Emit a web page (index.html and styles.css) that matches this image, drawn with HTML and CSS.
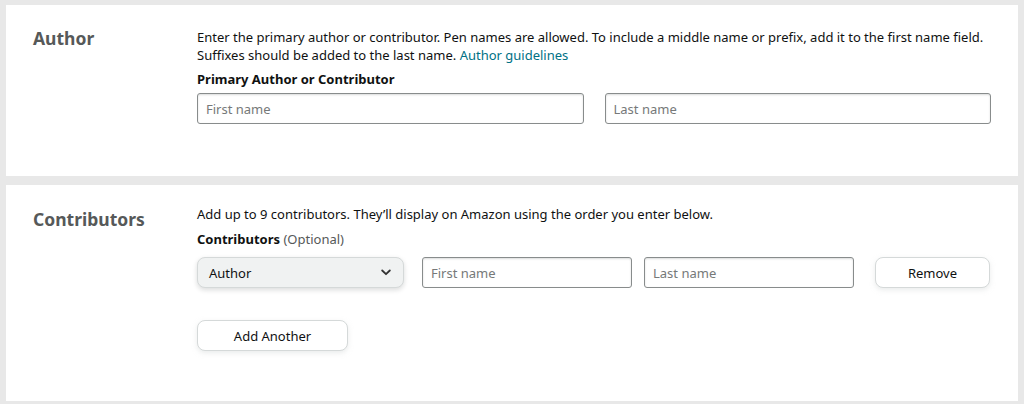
FILE: index.html
```html
<!DOCTYPE html>
<html lang="en">
<head>
<meta charset="utf-8">
<title>Author and Contributors</title>
<link rel="stylesheet" href="styles.css">
</head>
<body>
<div class="page">
  <section class="card card-author">
    <h2 class="card-title">Author</h2>
    <div class="card-body">
      <p class="desc"><span>Enter the primary author or contributor. Pen names are allowed. To include a middle name or prefix, add it to the first name field.</span><br><span>Suffixes should be added to the last name.</span> <a class="link" href="#">Author guidelines</a></p>
      <div class="label">Primary Author or Contributor</div>
      <div class="name-row">
        <input class="field" type="text" placeholder="First name">
        <input class="field" type="text" placeholder="Last name">
      </div>
    </div>
  </section>
  <section class="card card-contrib">
    <h2 class="card-title title-contrib">Contributors</h2>
    <div class="card-body">
      <p class="desc">Add up to 9 contributors. They’ll display on Amazon using the order you enter below.</p>
      <div class="label label-contrib">Contributors <span class="optional">(Optional)</span></div>
      <div class="contrib-row">
        <div class="select">
          <span>Author</span>
          <svg class="chevron" width="10" height="7" viewBox="0 0 10 7"><path d="M1.2 1.5 L5 5.2 L8.8 1.5" fill="none" stroke="#333" stroke-width="1.8" stroke-linecap="round" stroke-linejoin="round"/></svg>
        </div>
        <input class="field field-first" type="text" placeholder="First name">
        <input class="field field-last" type="text" placeholder="Last name">
        <button class="btn btn-remove" type="button">Remove</button>
      </div>
      <button class="btn btn-add" type="button">Add Another</button>
    </div>
  </section>
</div>
</body>
</html>
```
FILE: styles.css
```css
* { box-sizing: border-box; }
html, body { margin: 0; padding: 0; }
body {
  background: #e8e8e8;
  font-family: "Noto Sans", "Open Sans", Arial, sans-serif;
  font-size: 13px;
  color: #0f1111;
}
.page {
  padding: 5px 6px 3px 6px;
  display: flex;
  flex-direction: column;
  gap: 9px;
}
.card {
  background: #fff;
  display: grid;
  grid-template-columns: 164px 1fr;
  padding: 23px 27px 0 27px;
}
.card-author { height: 171px; }
.card-contrib { height: 216px; padding-top: 20px; }
.card-title {
  margin: 0;
  font-size: 17.5px;
  font-weight: 700;
  color: #565959;
  line-height: 26px;
  margin-top: -3px;
}
.title-contrib { margin-top: 1px; }
.card-body { display: flex; flex-direction: column; }
.desc {
  margin: 0;
  line-height: 18px;
}
.link {
  color: #007185;
  text-decoration: none;
}
.label {
  font-weight: 700;
  line-height: 17px;
  margin-top: 7px;
}
.label-contrib { margin-top: 8px; }
.optional { font-weight: 400; color: #565959; }
.name-row {
  display: flex;
  gap: 21px;
  margin-top: 5px;
}
.field {
  height: 31px;
  border: 1px solid #888c8c;
  border-radius: 3px;
  box-shadow: inset 0 1px 2px rgba(15,17,17,.15);
  padding: 0 8px;
  font-family: inherit;
  font-size: 13px;
  color: #0f1111;
  background: #fff;
  outline: none;
}
.field::placeholder { color: #767979; }
.name-row .field { flex: 1; min-width: 0; }
.contrib-row {
  display: flex;
  align-items: center;
  margin-top: 9px;
}
.select {
  width: 207px;
  height: 31px;
  background: #f0f2f2;
  border: 1px solid #d5d9d9;
  border-radius: 8px;
  box-shadow: 0 2px 5px rgba(15,17,17,.15);
  display: flex;
  align-items: center;
  justify-content: space-between;
  padding: 0 12px 0 11px;
  font-size: 13px;
}
.chevron { display: block; }
.field-first { width: 210px; margin-left: 18px; }
.field-last { width: 210px; margin-left: 12px; }
.btn {
  height: 31px;
  background: #fff;
  border: 1px solid #d5d9d9;
  border-radius: 8px;
  box-shadow: 0 2px 5px rgba(213,217,217,.5);
  font-family: inherit;
  font-size: 13px;
  color: #0f1111;
  padding: 0;
}
.btn-remove { width: 115px; margin-left: 21px; }
.btn-add { width: 151px; margin-top: 32px; }
```
